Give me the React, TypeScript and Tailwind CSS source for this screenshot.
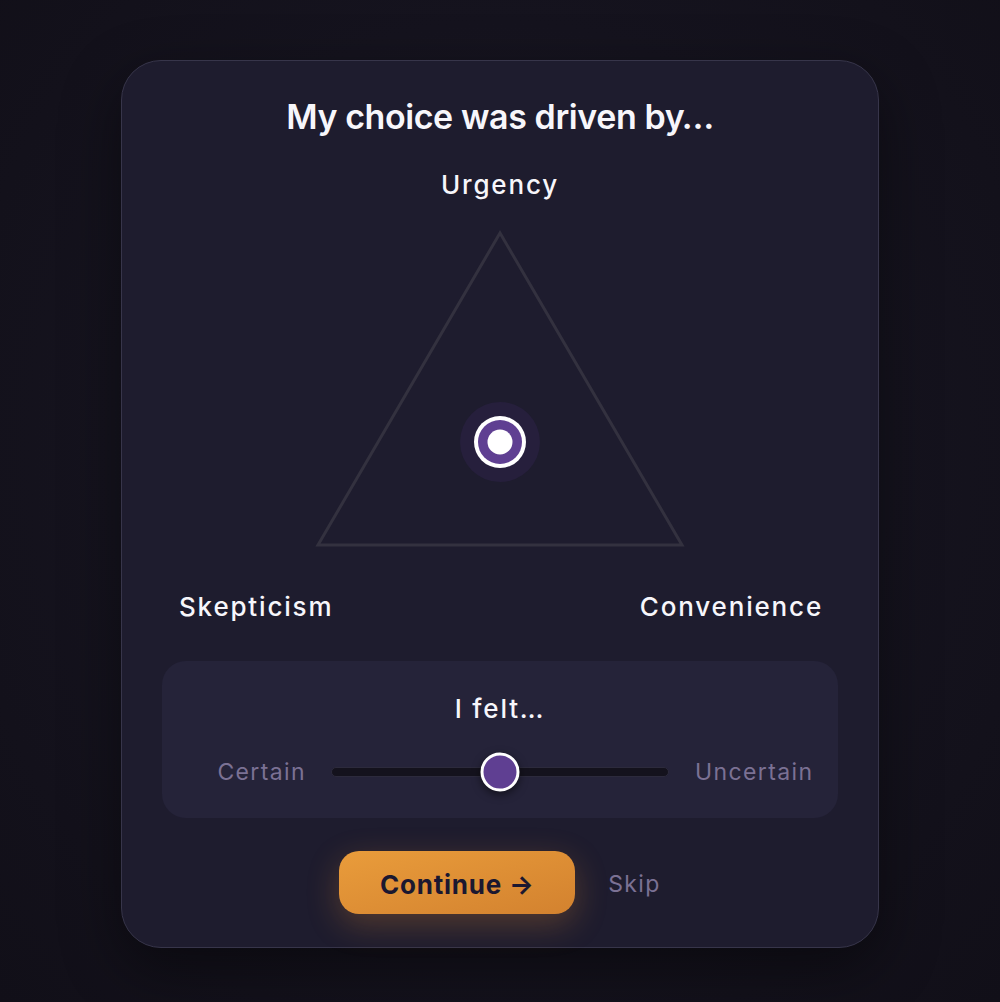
import React from 'react';

const Triangle = () => {
    return (
        <svg width="370" height="318" viewBox="0 0 370 318" className="block">
            <polygon points="185,3 3,315 367,315" fill="none" stroke="#33313f" strokeWidth="3" strokeLinejoin="miter" />
            <circle cx="185" cy="212" r="40" fill="#261f3c" />
            <circle cx="185" cy="212" r="26" fill="#ffffff" />
            <circle cx="185" cy="212" r="22" fill="#5f3f92" />
            <circle cx="185" cy="212" r="12.5" fill="#ffffff" />
        </svg>
    );
};

const App = () => {
    return (
        <div
            className="min-h-screen w-full flex justify-center pt-[60px] bg-[radial-gradient(ellipse_at_50%_45%,#1b1927_0%,#15131e_55%,#110f18_100%)]"
            style={{ fontFamily: 'Inter, "Noto Sans", sans-serif' }}
        >
            <div className="w-[758px] h-[888px] rounded-[40px] border border-[#37354a] bg-[#1e1c2e] shadow-[0_20px_60px_rgba(0,0,0,0.45)] px-10 pt-[36px] flex flex-col items-center">
                <h1 className="text-[34px] leading-[40px] font-semibold text-[#f7f6fb] tracking-[-0.012em]">
                    My choice was driven by…
                </h1>
                <div className="mt-[32px] text-[26px] leading-[32px] font-medium text-[#f7f6fb] tracking-[0.07em]">
                    Urgency
                </div>
                <div className="mt-[29px]">
                    <Triangle />
                </div>
                <div className="mt-[43px] w-full flex justify-between px-[17px] text-[26px] leading-[32px] font-medium text-[#f7f6fb] tracking-[0.07em]">
                    <span>Skepticism</span>
                    <span className="-mr-[2px]">Convenience</span>
                </div>
                <div className="mt-[38px] w-full h-[157px] rounded-[24px] bg-[#252339] pt-[32px] flex flex-col items-center">
                    <div className="text-[26px] leading-[32px] font-medium text-[#f7f6fb] tracking-[0.07em]">I felt…</div>
                    <div className="mt-[33px] w-full grid grid-cols-[1fr_338px_1fr] gap-[26px] items-center">
                        <span className="text-right text-[23px] leading-[28px] text-[#7b7194] tracking-[0.06em] -mr-[1px]">Certain</span>
                        <div className="relative h-[10px] rounded-full bg-[#14121d] border border-[#2c2a3c]">
                            <div className="absolute left-1/2 top-1/2 -translate-x-1/2 -translate-y-1/2 w-[39px] h-[39px] rounded-full bg-[#5f3f92] border-[3px] border-white shadow-[0_3px_8px_rgba(0,0,0,0.5)]" />
                        </div>
                        <span className="text-left text-[23px] leading-[28px] text-[#7b7194] tracking-[0.06em]">Uncertain</span>
                    </div>
                </div>
                <div className="mt-[33px] flex items-center gap-[33px]">
                    <button className="w-[236px] h-[63px] pt-[3px] rounded-[20px] bg-gradient-to-br from-[#e99c3b] to-[#d3822f] text-[#1b1830] text-[26px] font-bold tracking-[0.03em] shadow-[0_10px_32px_rgba(226,140,50,0.28)]">
                        Continue →
                    </button>
                    <span className="pt-[4px] text-[23px] text-[#7b7194] tracking-[0.06em]">Skip</span>
                </div>
            </div>
        </div>
    );
};

export default App;
